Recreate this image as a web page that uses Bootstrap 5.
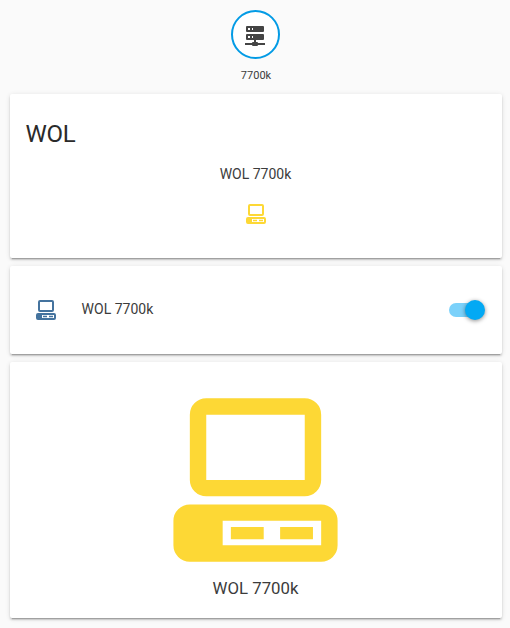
<!DOCTYPE html>
<html lang="en">
<head>
<meta charset="utf-8">
<meta name="viewport" content="width=device-width, initial-scale=1">
<title>WOL</title>
<link href="https://cdn.jsdelivr.net/npm/bootstrap@5.3.0/dist/css/bootstrap.min.css" rel="stylesheet">
<style>
  body { background: #fafafa; color: #3c3c3c; font-family: Roboto, "Liberation Sans", sans-serif; font-size: 14px; line-height: 20px; height: 628px; overflow: hidden; }
  .view { padding: 10px 8px 10px 10px; }
  .badge-block { height: 84px; padding-right: 1px; }
  .badge-ring { width: 49px; height: 49px; border: 2px solid #039be5; background: #fff; color: #444; padding: 1px 1px 0 0; }
  .badge-label { font-size: 11px; line-height: 16px; margin: 9px 0 0 1px; }
  .panel { border: 0; border-radius: 2px; color: #3c3c3c; box-shadow: 0 2px 2px 0 rgba(0,0,0,.14), 0 1px 5px 0 rgba(0,0,0,.12), 0 3px 1px -2px rgba(0,0,0,.2); }
  .glance { height: 164px; }
  .entities { height: 88px; padding: 0 16px 0 24px; }
  .entity-name { margin-left: 23.6px; padding-bottom: 2px; }
  .button-panel { height: 256px; padding-top: 20px; }
  .panel-title { font-size: 24px; line-height: 40px; font-weight: 400; letter-spacing: -.012em; color: #2a2a2a; margin: 0; padding: 20px 16px 0 15.6px; }
  .glance-item { padding: 10px 1px 0 0; }
  .icon { width: 24px; height: 24px; fill: currentColor; display: block; }
  .glance-icon { margin: 18px -1px 0 0; }
  .yellow { color: #fdd835; }
  .blue { color: #44739e; }
  .icon-large { width: 197px; height: 196px; margin: 0 1px 0 0; }
  .button-name { font-size: 16.8px; line-height: 20px; padding-right: 1px; }
  .switch-track { width: 36px; height: 14px; margin-right: 1px; border-radius: 7px; background: linear-gradient(#7bd1fa, #7bd1fa) 0 0 / 34px 14px no-repeat; }
  .switch-knob { width: 20px; height: 20px; background: #03a9f4; box-shadow: 0 1px 4px rgba(0,0,0,.45); }
</style>
</head>
<body>
<svg class="d-none" xmlns="http://www.w3.org/2000/svg">
  <symbol id="desktop" viewBox="0 0 24 24">
    <path fill-rule="evenodd" d="M6 2H18A2 2 0 0 1 20 4V12A2 2 0 0 1 18 14H6A2 2 0 0 1 4 12V4A2 2 0 0 1 6 2M6 4V12H18V4ZM4 15H20A2 2 0 0 1 22 17V20A2 2 0 0 1 20 22H4A2 2 0 0 1 2 20V17A2 2 0 0 1 4 15M8 17V20H20V17ZM9 17.75H13V19.25H9ZM15 17.75H19V19.25H15Z"/>
  </symbol>
</svg>
<main class="view d-flex flex-column">
  <div class="badge-block d-flex flex-column align-items-center">
    <div class="badge-ring rounded-circle d-flex align-items-center justify-content-center">
      <svg class="icon" viewBox="0 0 24 24"><path d="M13,19H14A1,1 0 0,1 15,20H22V22H15A1,1 0 0,1 14,23H10A1,1 0 0,1 9,22H2V20H9A1,1 0 0,1 10,19H11V17H4A1,1 0 0,1 3,16V12A1,1 0 0,1 4,11H20A1,1 0 0,1 21,12V16A1,1 0 0,1 20,17H13V19M4,3H20A1,1 0 0,1 21,4V8A1,1 0 0,1 20,9H4A1,1 0 0,1 3,8V4A1,1 0 0,1 4,3M9,7H10V5H9V7M9,15H10V13H9V15M5,5V7H7V5H5M5,13V15H7V13H5Z"/></svg>
    </div>
    <div class="badge-label">7700k</div>
  </div>
  <div class="d-flex flex-column gap-2">
    <section class="card panel glance">
      <h1 class="panel-title">WOL</h1>
      <div class="glance-item d-flex flex-column align-items-center">
        <div>WOL 7700k</div>
        <svg class="icon glance-icon yellow"><use href="#desktop"/></svg>
      </div>
    </section>
    <section class="card panel entities flex-row align-items-center">
      <svg class="icon blue"><use href="#desktop"/></svg>
      <span class="entity-name flex-grow-1">WOL 7700k</span>
      <div class="switch-track d-flex align-items-center justify-content-end" role="switch" aria-checked="true" aria-label="WOL 7700k">
        <span class="switch-knob rounded-circle flex-shrink-0"></span>
      </div>
    </section>
    <section class="card panel button-panel align-items-center">
      <svg class="icon icon-large yellow" viewBox="0 0 24 24" preserveAspectRatio="none"><use href="#desktop" width="24" height="24"/></svg>
      <div class="button-name">WOL 7700k</div>
    </section>
  </div>
</main>
<script src="https://cdn.jsdelivr.net/npm/bootstrap@5.3.0/dist/js/bootstrap.bundle.min.js"></script>
</body>
</html>
